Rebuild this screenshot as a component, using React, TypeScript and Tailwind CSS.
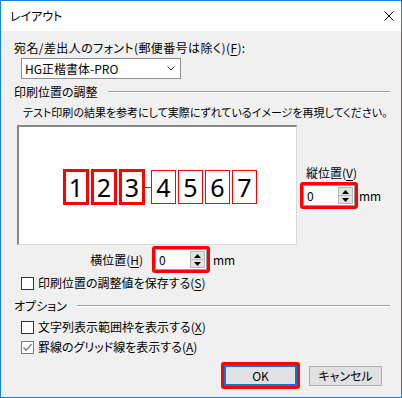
import React from "react";

const F = "font-['Noto_Sans_CJK_JP',sans-serif] [font-feature-settings:'palt']";

function U({ c }: { c: string }) {
  return <span className="underline underline-offset-[2px]">{c}</span>;
}

function Spin() {
  return (
    <div className="w-[58px] h-[27px] border-[3px] border-[#ff0000] rounded-[3px] flex">
      <div className="flex-1 bg-white border border-[#9a9a9a] flex items-center relative">
        <span className="pl-[3px] leading-[16px]">0</span>
        <div className="ml-auto mr-[1px] w-[15px] h-[17px] border border-[#b9b9b9] bg-[#e3e3e3] flex flex-col">
          <div className="flex-1 flex items-center justify-center border-b border-[#b9b9b9]">
            <svg width="7" height="4" viewBox="0 0 7 4"><path d="M0 4 L3.5 0 L7 4 Z" fill="#000" /></svg>
          </div>
          <div className="flex-1 flex items-center justify-center">
            <svg width="7" height="4" viewBox="0 0 7 4"><path d="M0 0 L3.5 4 L7 0 Z" fill="#000" /></svg>
          </div>
        </div>
      </div>
    </div>
  );
}

function Check({ checked, children }: { checked?: boolean; children: React.ReactNode }) {
  return (
    <div className="h-[16px] flex items-center ml-[7px]">
      <div
        className={
          "w-[13px] h-[13px] bg-white border flex items-center justify-center " +
          (checked ? "border-[#7a7a7a]" : "border-[#333333]")
        }
      >
        {checked && (
          <svg width="11" height="11" viewBox="0 0 11 11">
            <path d="M1.5 5.5 L4.2 8.3 L9.5 2" fill="none" stroke="#7a7a7a" strokeWidth="1.3" />
          </svg>
        )}
      </div>
      <span className="ml-[4px] leading-[16px]">{children}</span>
    </div>
  );
}

function Header({ text }: { text: string }) {
  return (
    <div className="h-[16px] flex items-center">
      <span className="leading-[16px]">{text}</span>
      <div className="flex-1 ml-[10px] mr-[11px] h-[2px] border-t border-[#a0a0a0] border-b border-b-white" />
    </div>
  );
}

export default function App() {
  const thick = "w-[26px] h-[36px] border-[3px] border-[#ff0000] flex items-center justify-center";
  const thin = "w-[25px] h-[34px] border border-[#ff0000] flex items-center justify-center";
  const digit = "font-['Noto_Sans',sans-serif] text-[25px] leading-[28px] text-black";
  return (
    <div className={"w-[402px] h-[398px] border border-[#1883d7] bg-[#f0f0f0] flex flex-col text-[12px] text-black " + F}>
      <div className="h-[30px] bg-white flex items-center pl-[9px]">
        <span className="leading-[16px]">レイアウト</span>
        <svg className="ml-auto mr-[7px]" width="10" height="10" viewBox="0 0 10 10">
          <path d="M0.5 0.5 L9.5 9.5 M9.5 0.5 L0.5 9.5" stroke="#000" strokeWidth="1" />
        </svg>
      </div>
      <div className="flex-1 flex flex-col pl-[13px]">
        <div className="mt-[9px] h-[16px] leading-[16px] tracking-[0.4px]">
          宛名/差出人のフォント(郵便番号は除く)(<U c="F" />):
        </div>
        <div className="mt-[2px] ml-[7px] w-[160px] h-[21px] bg-white border border-[#8f8f8f] flex items-center">
          <span className="pl-[3px] leading-[16px]">HG正楷書体-PRO</span>
          <svg className="ml-auto mr-[5px]" width="8" height="5" viewBox="0 0 8 5">
            <path d="M0.5 0.5 L4 4 L7.5 0.5" fill="none" stroke="#333" strokeWidth="1" />
          </svg>
        </div>
        <div className="mt-[5px]">
          <Header text="印刷位置の調整" />
        </div>
        <div className="mt-[4px] ml-[9px] h-[16px] leading-[16px] whitespace-nowrap text-[11px]">
          テスト印刷の結果を参考にして実際にずれているイメージを再現してください。
        </div>
        <div className="mt-[5px] flex">
          <div className="ml-[3px] w-[280px] h-[120px] bg-white border-t-2 border-l-2 border-t-[#8a8a8a] border-l-[#8a8a8a] border-b border-r border-b-[#d8d8d8] border-r-[#d8d8d8]">
            <div className="mt-[42px] ml-[44px] flex items-center">
              <div className={thick}><span className={digit}>1</span></div>
              <div className={"ml-[2px] " + thick}><span className={digit}>2</span></div>
              <div className={"ml-[2px] " + thick}><span className={digit}>3</span></div>
              <div className="w-[6px] h-[1px] bg-[#ff0000]" />
              <div className={thin}><span className={digit}>4</span></div>
              <div className={"ml-[2px] " + thin}><span className={digit}>5</span></div>
              <div className={"ml-[2px] " + thin}><span className={digit}>6</span></div>
              <div className={"ml-[2px] " + thin}><span className={digit}>7</span></div>
            </div>
          </div>
          <div className="ml-[3px] flex flex-col">
            <div className="mt-[40px] ml-[6px] h-[16px] leading-[16px]">
              縦位置(<U c="V" />)
            </div>
            <div className="mt-[1px] flex items-center">
              <Spin />
              <span className="ml-[1px] leading-[16px]">mm</span>
            </div>
          </div>
        </div>
        <div className="mt-[1px] h-[27px] flex items-center">
          <div className="w-[129px] text-right leading-[16px]">
            横位置(<U c="H" />)
          </div>
          <div className="ml-[9px]">
            <Spin />
          </div>
          <span className="ml-[3px] leading-[16px]">mm</span>
        </div>
        <div className="mt-[2px]">
          <Check>
            印刷位置の調整値を保存する(<U c="S" />)
          </Check>
        </div>
        <div className="mt-[7px]">
          <Header text="オプション" />
        </div>
        <div className="mt-[5px]">
          <Check>
            文字列表示範囲枠を表示する(<U c="X" />)
          </Check>
        </div>
        <div className="mt-[4px]">
          <Check checked>
            罫線のグリッド線を表示する(<U c="A" />)
          </Check>
        </div>
        <div className="mt-[7px] flex items-center justify-end mr-[19px]">
          <div className="w-[79px] h-[27px] border-[3px] border-[#ff0000] rounded-[3px] flex">
            <div className="flex-1 bg-[#e1e1e1] border-2 border-[#0078d7] flex items-center justify-center leading-[16px]">
              OK
            </div>
          </div>
          <div className="ml-[9px] w-[73px] h-[20px] bg-[#e1e1e1] border border-[#adadad] flex items-center justify-center leading-[16px]">
            キャンセル
          </div>
        </div>
      </div>
    </div>
  );
}
